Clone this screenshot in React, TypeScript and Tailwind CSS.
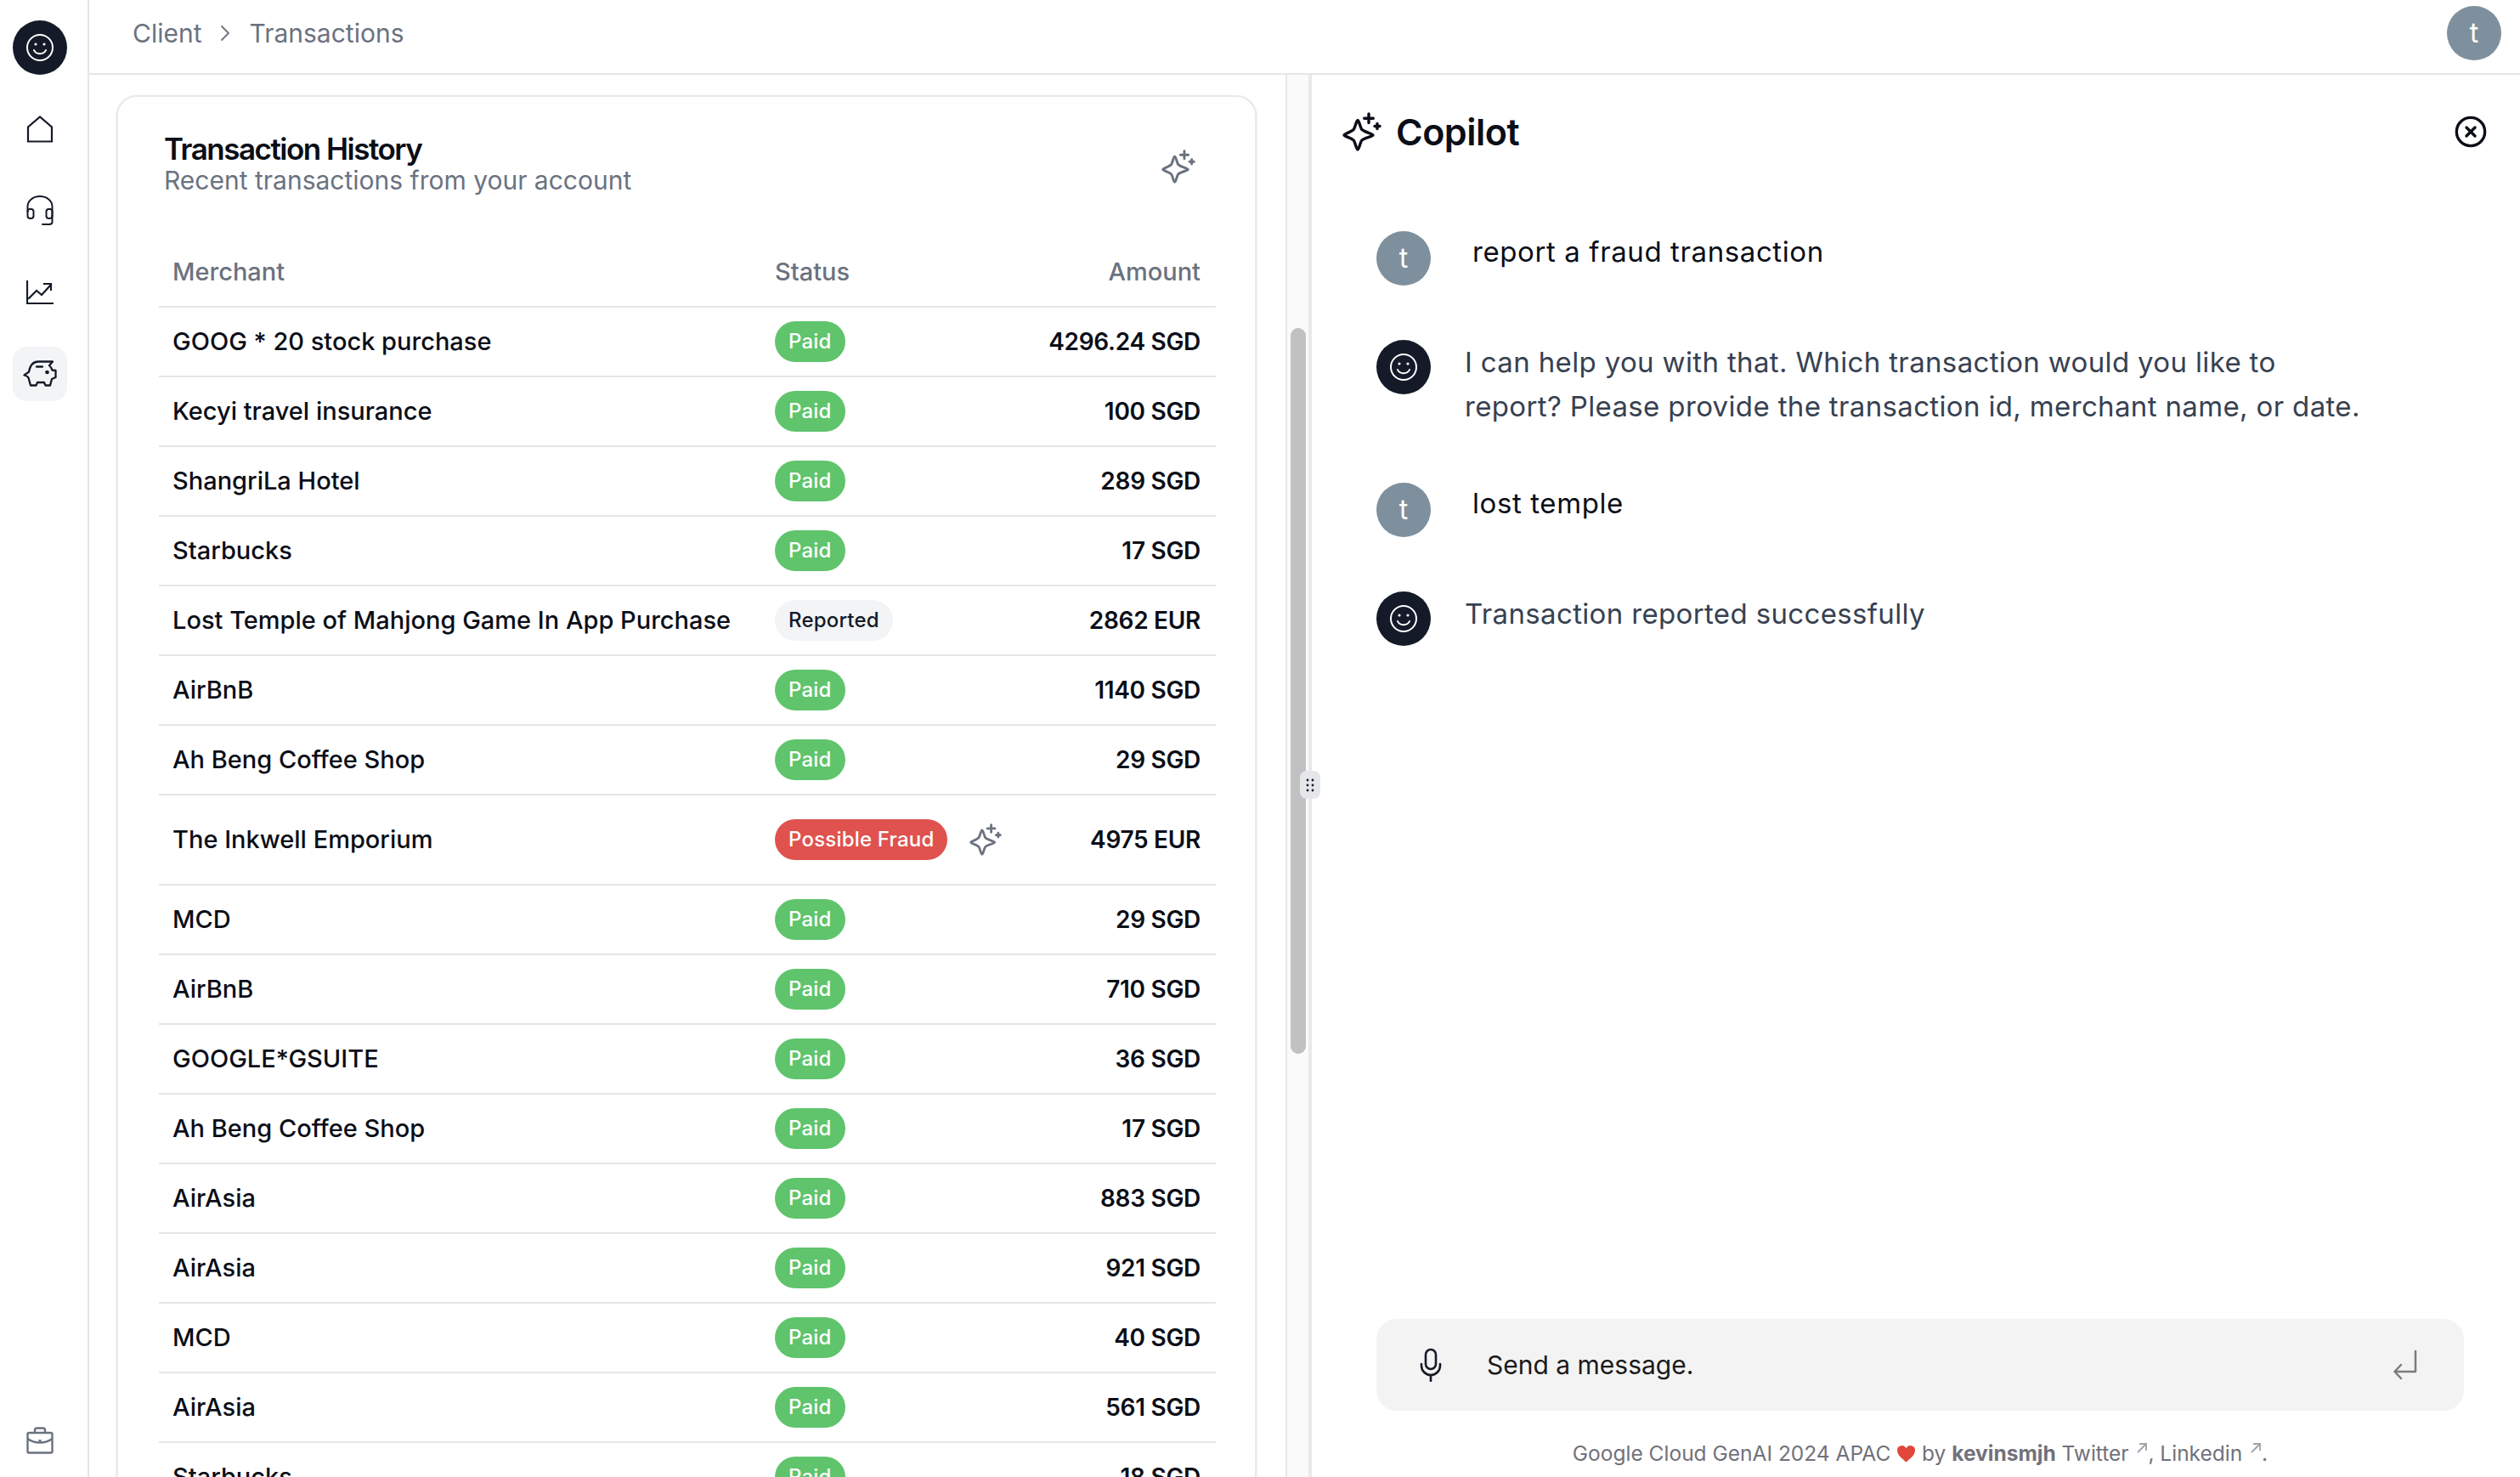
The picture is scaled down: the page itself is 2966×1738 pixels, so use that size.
import { CircleX } from "lucide-react";

const FONT = "font-['Inter','Liberation_Sans',sans-serif]";

type Tx = { merchant: string; status: "Paid" | "Reported" | "Possible Fraud"; amount: string };

const rows: Tx[] = [
  { merchant: "GOOG * 20 stock purchase", status: "Paid", amount: "4296.24 SGD" },
  { merchant: "Kecyi travel insurance", status: "Paid", amount: "100 SGD" },
  { merchant: "ShangriLa Hotel", status: "Paid", amount: "289 SGD" },
  { merchant: "Starbucks", status: "Paid", amount: "17 SGD" },
  { merchant: "Lost Temple of Mahjong Game In App Purchase", status: "Reported", amount: "2862 EUR" },
  { merchant: "AirBnB", status: "Paid", amount: "1140 SGD" },
  { merchant: "Ah Beng Coffee Shop", status: "Paid", amount: "29 SGD" },
  { merchant: "The Inkwell Emporium", status: "Possible Fraud", amount: "4975 EUR" },
  { merchant: "MCD", status: "Paid", amount: "29 SGD" },
  { merchant: "AirBnB", status: "Paid", amount: "710 SGD" },
  { merchant: "GOOGLE*GSUITE", status: "Paid", amount: "36 SGD" },
  { merchant: "Ah Beng Coffee Shop", status: "Paid", amount: "17 SGD" },
  { merchant: "AirAsia", status: "Paid", amount: "883 SGD" },
  { merchant: "AirAsia", status: "Paid", amount: "921 SGD" },
  { merchant: "MCD", status: "Paid", amount: "40 SGD" },
  { merchant: "AirAsia", status: "Paid", amount: "561 SGD" },
  { merchant: "Starbucks", status: "Paid", amount: "18 SGD" },
];

function Smile({ className }: { className?: string }) {
  return (
    <svg viewBox="0 0 32 32" fill="none" stroke="currentColor" strokeWidth="2" strokeLinecap="round" className={className}>
      <circle cx="16" cy="16" r="15" />
      <path d="M9 19c2 5.500 12 5.500 14 0" />
      <circle cx="11" cy="12" r="1.600" fill="currentColor" stroke="none" />
      <circle cx="21" cy="12" r="1.600" fill="currentColor" stroke="none" />
    </svg>
  );
}

function Sparkle({ className }: { className?: string }) {
  return (
    <svg viewBox="0 0 46 46" fill="none" stroke="currentColor" strokeWidth="3.400" strokeLinejoin="round" strokeLinecap="round" className={className}>
      <path d="M18 9.500 C19.500 9.500 20.500 16 22.500 20 C24.500 23 36 25.500 36 27 C36 28.500 24.500 30.500 22.500 33.500 C20.500 37 19.500 44 18 44 C16.500 44 15.500 37 13.500 33.500 C11.500 30.500 2 28.500 2 27 C2 25.500 11.500 23 13.500 20 C15.500 16 16.500 9.500 18 9.500 Z" />
      <path d="M31 2v10.500M25.700 7.200h10.600" />
      <path d="M41 13.500v6M38 16.500h6" />
    </svg>
  );
}

function BotAvatar() {
  return (
    <div className="flex h-16 w-16 shrink-0 items-center justify-center rounded-full bg-[#141a28] text-white">
      <Smile className="h-8 w-8" />
    </div>
  );
}

function UserAvatar() {
  return (
    <div className="flex h-16 w-16 shrink-0 items-center justify-center rounded-full bg-[#7e909d] text-[32px] text-white">t</div>
  );
}

function NavButton({ active, children }: { active?: boolean; children: React.ReactNode }) {
  return (
    <div className={`flex h-16 w-16 items-center justify-center rounded-2xl text-[#141a28] ${active ? "bg-[#f3f4f6]" : ""}`}>{children}</div>
  );
}

function Sidebar() {
  return (
    <aside className="flex w-[105px] shrink-0 flex-col items-start border-r-2 border-[#e5e5ea] pt-6 pb-[11px] pl-[15px]">
      <BotAvatar />
      <nav className="mt-8 flex flex-col gap-8">
        <NavButton>
          <svg viewBox="0 0 32 32" fill="none" stroke="currentColor" strokeWidth="2.200" className="h-8 w-8">
            <path d="M2 30.500V13.500L16 1.500 30 13.500v17Z" />
          </svg>
        </NavButton>
        <NavButton>
          <svg viewBox="0 0 32 36" fill="none" stroke="currentColor" strokeWidth="2" strokeLinecap="round" className="h-9 w-8">
            <path d="M1.500 19v-6a14.500 12 0 0 1 29 0v18c0 2.500-1.500 3-3.500 3h-8" />
            <rect x="1.500" y="16" width="7" height="11" rx="3" />
            <rect x="23.500" y="16" width="7" height="11" rx="3" />
          </svg>
        </NavButton>
        <NavButton>
          <svg viewBox="0 0 32 28" fill="none" stroke="currentColor" strokeWidth="2.200" strokeLinecap="square" className="h-7 w-8">
            <path d="M1 1v26h30" />
            <path d="M3 21 12 12l6 5L28 6" />
            <path d="M21 4h8v7" />
          </svg>
        </NavButton>
        <NavButton active>
          <svg viewBox="0 0 40 32" fill="none" stroke="currentColor" strokeWidth="2.300" strokeLinecap="round" strokeLinejoin="round" className="h-8 w-10">
            <path d="M35 1.500H18C12 1.500 8.500 6 7 13.500 6 15 3.500 15.500 1.500 17.500 3.500 18 5.500 18.500 6.500 20.500L9 29.500h6.500l1.500-3.500h8l1.500 3.500h5.500l2-7.500 4.500-2V12l-4-.5C34 9 32 7 31 6l4-4.500Z" />
            <path d="M16 7.500h7" />
            <circle cx="28.500" cy="14" r="1.200" fill="currentColor" />
          </svg>
        </NavButton>
      </nav>
      <div className="mt-auto flex h-16 w-16 items-center justify-center text-[#6b7280]">
        <svg viewBox="0 0 32 32" fill="none" stroke="currentColor" strokeWidth="2.400" strokeLinejoin="round" className="h-8 w-8">
          <path d="M10 7V4c0-1.500 1-2.500 2.500-2.500h7C21 1.500 22 2.500 22 4v3" />
          <rect x="1.500" y="7" width="29" height="23.500" rx="1.500" />
          <path d="M1.500 14c8 6 21 6 29 0" />
          <path d="M14.500 16.500h3" strokeWidth="3" />
        </svg>
      </div>
    </aside>
  );
}

function Badge({ status }: { status: Tx["status"] }) {
  const color =
    status === "Paid"
      ? "bg-[#5fc46c] text-white"
      : status === "Reported"
        ? "bg-[#f3f4f6] text-[#141a28]"
        : "bg-[#df524e] text-white";
  return <span className={`inline-flex h-12 items-center rounded-full px-4 text-[24px] tracking-[0.2px] ${color}`}>{status}</span>;
}

function TxRow({ tx }: { tx: Tx }) {
  const fraud = tx.status === "Possible Fraud";
  return (
    <div className={`flex items-center border-b-2 border-[#e5e5ea] pr-[18px] pl-4 font-medium text-[#0b0e17] ${fraud ? "h-[106px]" : "h-[82px]"}`}>
      <div className="w-[709px] shrink-0 text-[29px] whitespace-nowrap">{tx.merchant}</div>
      <div className="flex items-center gap-[26px]">
        <Badge status={tx.status} />
        {fraud && <Sparkle className="h-[38px] w-[38px] text-[#6b7280]" />}
      </div>
      <div className="ml-auto text-[28px] font-semibold tracking-[-0.3px] whitespace-nowrap">{tx.amount}</div>
    </div>
  );
}

function TransactionCard() {
  return (
    <section className="h-[1700px] rounded-t-3xl border-2 border-[#e9e9ed] bg-white pt-[42px] pr-[46px] pl-[48px] shadow-sm">
      <div className="flex items-center justify-between pr-[2px]">
        <div className="pl-[6px]">
          <h2 className="text-[35px] leading-[38px] font-semibold tracking-[-1.500px] text-[#0b0e17]">Transaction History</h2>
          <p className="text-[30px] leading-[36px] text-[#6b7280]">Recent transactions from your account</p>
        </div>
        <Sparkle className="mt-[6px] mr-[22px] h-[40px] w-[40px] text-[#6b7280]" />
      </div>
      <div className="mt-[46px]">
        <div className="flex h-[86px] items-center border-b-2 border-[#e5e5ea] pt-1 pr-[18px] pl-4 text-[29px] font-medium text-[#6b7280]">
          <div className="w-[709px]">Merchant</div>
          <div>Status</div>
          <div className="ml-auto">Amount</div>
        </div>
        {rows.map((tx, i) => (
          <TxRow key={i} tx={tx} />
        ))}
      </div>
    </section>
  );
}

function ArrowUp() {
  return (
    <svg viewBox="0 0 14 14" fill="none" stroke="#a1a1aa" strokeWidth="1.800" className="mb-3 ml-[2px] h-[14px] w-[14px]">
      <path d="M2 12 12 2M4 2h8v8" />
    </svg>
  );
}

function Composer() {
  return (
    <div>
      <div className="flex h-[108px] items-center rounded-3xl bg-[#f3f3f3] pr-[52px] pl-[48px]">
        <svg viewBox="0 0 32 40" fill="none" stroke="#141a28" strokeWidth="2.600" strokeLinecap="round" className="h-10 w-8">
          <rect x="10" y="2" width="12" height="23" rx="6" />
          <path d="M5 19v2a11 11 0 0 0 22 0v-2M16 32v7" />
        </svg>
        <span className="ml-[50px] text-[30px] text-[#1a1a1a]">Send a message.</span>
        <svg viewBox="0 0 32 36" fill="none" stroke="#7c7c7c" strokeWidth="2.500" strokeLinecap="round" strokeLinejoin="round" className="ml-auto h-9 w-8">
          <path d="M27 2v24H3" />
          <path d="M10 18 2.500 26 10 34" />
        </svg>
      </div>
      <p className="mt-[34px] flex items-center justify-center text-[24.500px] leading-[32px] whitespace-pre text-[#71717a]">
        <span>Google Cloud GenAI 2024 APAC </span>
        <svg viewBox="0 0 24 22" className="h-[21px] w-[23px]">
          <path d="M12 21.500C8 17.500 1 13 1 7a5.700 5.700 0 0 1 11-2.300A5.700 5.700 0 0 1 23 7c0 6-7 10.500-11 14.500Z" fill="#e2453a" />
        </svg>
        <span> by </span>
        <b className="font-bold">kevinsmjh</b>
        <span> Twitter </span>
        <ArrowUp />
        <span>, Linkedin </span>
        <ArrowUp />
        <span>.</span>
      </p>
    </div>
  );
}

function Copilot() {
  return (
    <section className="flex min-w-0 flex-1 flex-col pt-[41px] pr-[66px] pb-[12px] pl-[36px]">
      <div className="flex items-center justify-between">
        <div className="flex items-center gap-[17px]">
          <Sparkle className="h-[46px] w-[46px] text-[#0b0e17]" />
          <h1 className="text-[43px] leading-[52px] font-semibold tracking-[-0.500px] text-[#0b0e17]">Copilot</h1>
        </div>
        <CircleX className="-mr-[28px] h-10 w-10 text-[#0b0e17]" />
      </div>
      <div className="mt-[91px] flex flex-1 flex-col gap-16 pl-[40px]">
        <div className="flex h-16 items-start">
          <UserAvatar />
          <p className="ml-[49px] text-[33px] leading-[48px] tracking-[0.6px] text-[#0b0e17]">report a fraud transaction</p>
        </div>
        <div className="flex items-start">
          <BotAvatar />
          <p className="ml-10 w-[1070px] text-[33px] leading-[52px] tracking-[0.35px] text-[#374151]">
            I can help you with that. Which transaction would you like to report? Please provide the transaction id, merchant name, or date.
          </p>
        </div>
        <div className="flex h-16 items-start">
          <UserAvatar />
          <p className="ml-[49px] text-[33px] leading-[48px] tracking-[0.6px] text-[#0b0e17]">lost temple</p>
        </div>
        <div className="flex items-start">
          <BotAvatar />
          <p className="ml-10 text-[33px] leading-[52px] tracking-[0.35px] text-[#374151]">Transaction reported successfully</p>
        </div>
      </div>
      <div className="pl-[40px]">
        <Composer />
      </div>
    </section>
  );
}

export default function App() {
  return (
    <div className={`flex h-[1738px] w-[2966px] overflow-hidden bg-white ${FONT}`}>
      <Sidebar />
      <main className="flex min-w-0 flex-1 flex-col">
        <header className="flex h-[88px] shrink-0 items-center border-b-2 border-[#e5e5ea] pr-[22px] pb-[8px] pl-[51px] text-[30px] text-[#6b7280]">
          <span>Client</span>
          <svg viewBox="0 0 12 20" fill="none" stroke="currentColor" strokeWidth="1.800" strokeLinecap="round" strokeLinejoin="round" className="mx-[22px] h-[20px] w-[12px]">
            <path d="M2 2l8 8-8 8" />
          </svg>
          <span>Transactions</span>
          <div className="ml-auto">
            <UserAvatar />
          </div>
        </header>
        <div className="flex min-h-0 flex-1">
          <div className="w-[1408px] shrink-0 overflow-hidden pt-6 pr-[34px] pl-[32px]">
            <TransactionCard />
          </div>
          <div className="relative w-[31px] shrink-0 border-x-2 border-r-4 border-x-[#e9e9ed] bg-[#fafafa]">
            <div className="mt-[298px] ml-[4px] h-[854px] w-[18px] rounded-full bg-[#c1c1c1]" />
            <div className="absolute top-[819px] -right-[14px] flex h-[33px] w-[24px] items-center justify-center rounded-lg bg-[#e5e7eb]">
              <svg viewBox="0 0 10 16" fill="#141a28" className="h-4 w-[10px]">
                <circle cx="2" cy="2" r="1.400" /><circle cx="8" cy="2" r="1.400" />
                <circle cx="2" cy="8" r="1.400" /><circle cx="8" cy="8" r="1.400" />
                <circle cx="2" cy="14" r="1.400" /><circle cx="8" cy="14" r="1.400" />
              </svg>
            </div>
          </div>
          <Copilot />
        </div>
      </main>
    </div>
  );
}
